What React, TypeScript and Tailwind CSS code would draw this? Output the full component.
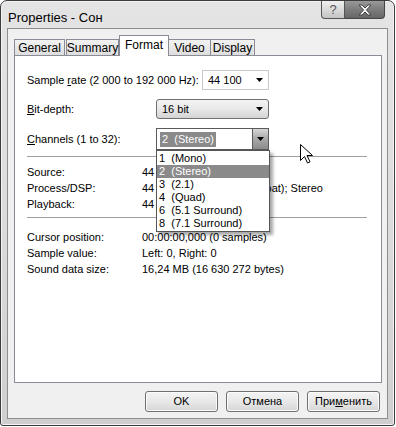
import { ReactNode } from "react";

const font = { fontFamily: '"Liberation Sans", Arial, sans-serif' };

function Arrow({ className = "" }: { className?: string }) {
  return (
    <svg width="7" height="4" viewBox="0 0 7 4" className={className}>
      <path d="M0 0h7L3.5 4z" fill="#000" />
    </svg>
  );
}

function InfoRow({ label, value }: { label: string; value: ReactNode }) {
  return (
    <div className="flex h-[16px] items-center">
      <div className="w-[115px] shrink-0">{label}</div>
      <div className="whitespace-nowrap">{value}</div>
    </div>
  );
}

function Button({ children }: { children: ReactNode }) {
  return (
    <button className="flex h-[21px] w-[73px] items-center justify-center rounded-[3px] border border-[#707070] bg-gradient-to-b from-[#f4f4f4] via-[#e8e8e8] to-[#d6d6d6] text-[11px] text-black shadow-[inset_0_0_0_1px_#fbfbfb]">
      {children}
    </button>
  );
}

export default function App() {
  const channels = ["1  (Mono)", "2  (Stereo)", "3  (2.1)", "4  (Quad)", "6  (5.1 Surround)", "8  (7.1 Surround)"];

  return (
    <div
      className="flex h-[427px] w-[396px] flex-col bg-white text-[11px] text-black"
      style={font}
    >
      {/* WINDOW */}
      <div className="flex h-[426px] w-[395px] flex-col rounded-t-[7px] rounded-b-[3px] border border-[#3c3c3c] bg-gradient-to-b from-[#e4e4e4] via-[#dcdcdc] to-[#cfcfcf] px-[6px] pb-[6px] shadow-[inset_0_0_0_1px_#f4f4f4]">

        {/* TITLE BAR */}
        <div className="flex h-[27px] shrink-0 items-start justify-between">
          <div className="pl-[1px] pt-[7px] text-[13px] text-black">Properties - Сон</div>
          <div className="mr-[3px] flex">
            <div className="flex h-[18px] w-[24px] items-center justify-center rounded-bl-[4px] border border-t-0 border-[#555] bg-gradient-to-b from-[#f0f0f0] to-[#c4c4c4] text-[13px] text-[#555]">
              ?
            </div>
            <div className="flex h-[18px] w-[40px] items-center justify-center rounded-br-[4px] border border-l-0 border-t-0 border-[#444] bg-gradient-to-b from-[#9a9a9a] via-[#7c7c7c] to-[#666]">
              <svg width="16" height="12" viewBox="0 0 16 12">
                <path
                  d="M2 1h3l3 3 3-3h3l-4.5 5L14 11h-3L8 8l-3 3H2l4.5-5z"
                  fill="#f4f4f4"
                  stroke="#444"
                  strokeWidth="1"
                />
              </svg>
            </div>
          </div>
        </div>

        {/* CLIENT */}
        <div className="flex flex-1 flex-col border border-[#8e8e8e] bg-[#f0f0f0] pl-[6px] pr-[5px] pt-[6px]">

          {/* TABS */}
          <div className="relative z-10 flex h-[20px] shrink-0 items-end text-[12px]">
            <div className="flex h-[16px] w-[51px] items-center justify-center border border-b-0 border-[#898c95] bg-gradient-to-b from-[#f2f2f2] to-[#dedede] pt-[1px]">General</div>
            <div className="ml-[1px] flex h-[16px] w-[53px] items-center justify-center border border-b-0 border-[#898c95] bg-gradient-to-b from-[#f2f2f2] to-[#dedede] pt-[1px]">Summary</div>
            <div className="-mb-[1px] flex h-[21px] w-[50px] items-center justify-center border border-b-0 border-[#898c95] bg-white pb-[2px]">Format</div>
            <div className="flex h-[16px] w-[42px] items-center justify-center border border-b-0 border-l-0 border-[#898c95] bg-gradient-to-b from-[#f2f2f2] to-[#dedede] pt-[1px]">Video</div>
            <div className="flex h-[16px] w-[44px] items-center justify-center border border-b-0 border-l-0 border-[#898c95] bg-gradient-to-b from-[#f2f2f2] to-[#dedede] pt-[1px]">Display</div>
          </div>

          {/* PANEL */}
          <div className="relative flex h-[328px] shrink-0 flex-col border border-[#898c95] bg-white pl-[12px] pr-[14px] pt-[14px]">

            <div className="flex h-[20px] items-center">
              <div className="w-[175px] shrink-0 whitespace-nowrap">
                Sample <span className="underline">r</span>ate (2 000 to 192 000 Hz):
              </div>
              <div className="flex h-[20px] w-[67px] items-center justify-between border border-[#c9c9c9] bg-white pl-[5px] pr-[5px]">
                <span>44 100</span>
                <Arrow />
              </div>
            </div>

            <div className="mt-[9px] flex h-[20px] items-center">
              <div className="w-[129px] shrink-0">
                <span className="underline">B</span>it-depth:
              </div>
              <div className="flex h-[20px] w-[113px] items-center justify-between rounded-[3px] border border-[#707070] bg-gradient-to-b from-[#f4f4f4] via-[#e8e8e8] to-[#d4d4d4] pl-[5px] pr-[5px]">
                <span>16 bit</span>
                <Arrow />
              </div>
            </div>

            <div className="mt-[9px] flex h-[22px] items-center">
              <div className="w-[129px] shrink-0">
                <span className="underline">C</span>hannels (1 to 32):
              </div>
              <div className="flex h-[22px] w-[113px] items-center border border-[#5a5a5a] bg-white pl-[3px]">
                <span className="whitespace-pre bg-[#8a8a8a] px-[2px] leading-[15px] text-white">2  (Stereo)</span>
                <div className="ml-auto flex h-[20px] w-[16px] items-center justify-center border-l border-[#5a5a5a] bg-gradient-to-b from-[#d8d8d8] via-[#a8a8a8] to-[#8c8c8c]">
                  <Arrow />
                </div>
              </div>
            </div>

            <div className="mt-[6px] h-px bg-[#a0a0a0]" />

            <div className="mt-[7px] flex flex-col">
              <InfoRow label="Source:" value="44 100 Hz; 16 bit" />
              <InfoRow label="Process/DSP:" value="44 100 Hz; 32 bit (IEEE float); Stereo" />
              <InfoRow label="Playback:" value="44 100 Hz; 16 bit" />
            </div>

            <div className="mt-[5px] h-px bg-[#a0a0a0]" />

            <div className="mt-[11px] flex flex-col">
              <InfoRow label="Cursor position:" value="00:00:00,000  (0 samples)" />
              <InfoRow label="Sample value:" value="Left: 0, Right: 0" />
              <InfoRow label="Sound data size:" value="16,24 MB (16 630 272 bytes)" />
            </div>

            {/* OPEN DROPDOWN LIST */}
            <div className="absolute left-[141px] top-[94px] w-[114px] border border-[#555] bg-white py-px shadow-[3px_3px_3px_rgba(0,0,0,0.35)]">
              {channels.map((c, i) => (
                <div
                  key={c}
                  className={
                    "h-[13px] whitespace-pre pl-[2px] leading-[13px] " +
                    (i === 1 ? "bg-[#8a8a8a] text-white" : "")
                  }
                >
                  {c}
                </div>
              ))}
            </div>

            {/* MOUSE CURSOR */}
            <svg
              className="absolute left-[285px] top-[88px]"
              width="13"
              height="20"
              viewBox="0 0 13 20"
            >
              <path
                d="M0.5 0.5v16l4-4 3 6.5 2.5-1.2-3-6.3h5.5z"
                fill="#fff"
                stroke="#000"
                strokeWidth="1"
              />
            </svg>
          </div>

          {/* BUTTONS */}
          <div className="mr-[2px] mt-[8px] flex justify-end gap-[8px]">
            <Button>OK</Button>
            <Button>Отмена</Button>
            <Button>
              При<span className="underline">м</span>енить
            </Button>
          </div>
        </div>
      </div>
    </div>
  );
}
